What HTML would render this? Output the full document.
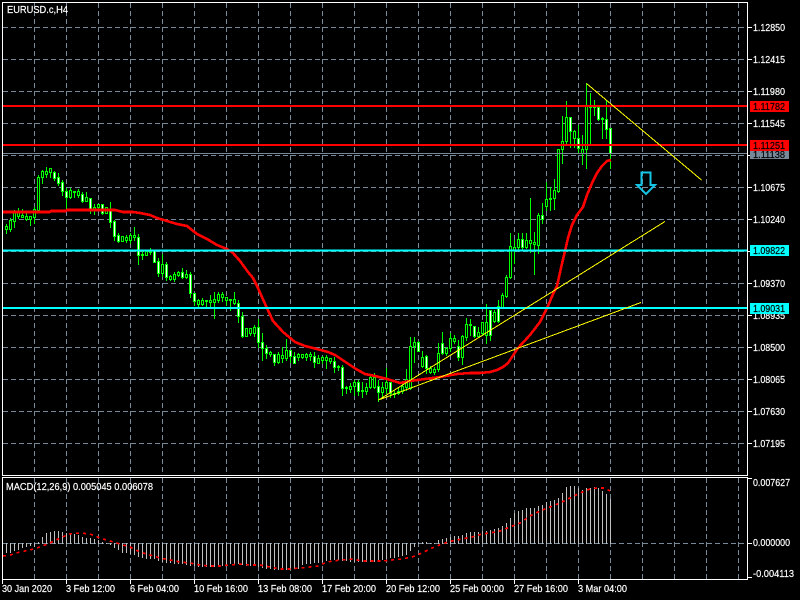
<!DOCTYPE html>
<html><head><meta charset="utf-8"><title>EURUSD.c,H4</title>
<style>
html,body{margin:0;padding:0;background:#000;width:800px;height:600px;overflow:hidden}
svg{display:block;position:absolute;left:0;top:0}
text{font-family:"Liberation Sans",sans-serif;font-size:10.5px;fill:#fff;stroke:#fff;stroke-width:.2px}
.k{fill:#000;stroke:#000}
</style></head><body>
<svg id="c" width="800" height="600" viewBox="0 0 800 600" xmlns="http://www.w3.org/2000/svg">
<g id="grid" stroke="#778899" stroke-width="1" stroke-dasharray="5 3" shape-rendering="crispEdges"></g>
<g id="hist" stroke="#c0c0c0" stroke-width="1" shape-rendering="crispEdges"></g>
<polyline fill="none" stroke="#ff0000" stroke-width="1.6" stroke-dasharray="3 4" shape-rendering="crispEdges" points="3,556 10,555 20,552 30,550 40,547 50,543 60,538 70,534 80,533 90,534 100,538 110,541 120,544 130,547 140,552 150,555 160,558 170,560 180,562 190,563 200,565 210,566 220,566 230,565 240,564 250,565 260,565 270,567 280,569 290,569 300,568 310,567 318,566 322,564 332,561 342,560 352,559 362,561 372,561 382,561 392,560 402,559 412,557 422,553 432,548 442,544 452,541 462,539 472,537 482,534 490,533 500,531 510,527 520,523 530,516 540,511 550,507 560,503 570,498 580,493 590,489 597,488 605,488 610,491"/>
<g id="cand" shape-rendering="crispEdges"></g>
<polyline fill="none" stroke="#ff0000" stroke-width="2.6" shape-rendering="crispEdges" stroke-linejoin="round" points="3,212 50,212 51,211 66,211 67,210 115,210 123,212 133,212 140,213 150,215 157,218 167,221 177,224 187,226 192,230 197,234 207,239 217,245 227,249 233,253 240,261 248,272 253,278 258,288 262,297 266,306 273,321 283,332 295,342 305,346 317,349 328,352 335,355 347,363 356,369 365,374 375,376 387,379 400,383 410,381 425,379 440,377 457,374 470,373 480,373 490,372 497,370 503,367 508,363 518,348 530,335 540,322 548,306 553,294 557,286 561,268 565,251 568,238 572,225 577,215 583,207 587,195 592,183 597,173 602,166 607,161 611,160"/>
<g shape-rendering="crispEdges">
<rect x="3" y="153" width="744" height="1" fill="#778899"/>
<rect x="3" y="105" width="744" height="2" fill="#ff0000"/>
<rect x="3" y="144" width="744" height="2" fill="#ff0000"/>
<rect x="3" y="249.5" width="744" height="2" fill="#00ffff"/>
<rect x="3" y="307" width="744" height="2" fill="#00ffff"/>
</g>
<g stroke="#ffff00" stroke-width="1" fill="none" shape-rendering="crispEdges">
<line x1="586.5" y1="83.5" x2="701.5" y2="180"/>
<line x1="378.5" y1="400" x2="665" y2="221.5"/>
<line x1="378.5" y1="400" x2="641" y2="302.5"/>
</g>
<path d="M641.5 172.5H650.5V185H655L646 194L637 185H641.5Z" fill="none" stroke="#14c4e4" stroke-width="2"/>

<g fill="#fff" shape-rendering="crispEdges">
<rect x="2" y="2" width="746" height="1"/>
<rect x="2" y="2" width="1" height="474"/>
<rect x="747" y="2" width="1" height="474"/>
<rect x="2" y="475" width="746" height="1"/>
<rect x="2" y="477" width="746" height="1"/>
<rect x="2" y="477" width="1" height="103"/>
<rect x="747" y="477" width="1" height="103"/>
<rect x="2" y="579" width="746" height="1"/>
</g>
<g id="ticks" fill="#fff" shape-rendering="crispEdges"></g>

<g>
<text x="7" y="13" textLength="61" lengthAdjust="spacingAndGlyphs">EURUSD.c,H4</text>
<text x="6" y="490" textLength="147" lengthAdjust="spacingAndGlyphs">MACD(12,26,9) 0.005045 0.006078</text>
<text x="753" y="31" textLength="32" lengthAdjust="spacingAndGlyphs">1.12850</text>
<text x="753" y="63" textLength="32" lengthAdjust="spacingAndGlyphs">1.12415</text>
<text x="753" y="95" textLength="32" lengthAdjust="spacingAndGlyphs">1.11980</text>
<text x="753" y="127" textLength="32" lengthAdjust="spacingAndGlyphs">1.11545</text>
<text x="753" y="191" textLength="32" lengthAdjust="spacingAndGlyphs">1.10675</text>
<text x="753" y="223" textLength="32" lengthAdjust="spacingAndGlyphs">1.10240</text>
<text x="753" y="287" textLength="32" lengthAdjust="spacingAndGlyphs">1.09370</text>
<text x="753" y="319" textLength="32" lengthAdjust="spacingAndGlyphs">1.08935</text>
<text x="753" y="351" textLength="32" lengthAdjust="spacingAndGlyphs">1.08500</text>
<text x="753" y="383" textLength="32" lengthAdjust="spacingAndGlyphs">1.08065</text>
<text x="753" y="415" textLength="32" lengthAdjust="spacingAndGlyphs">1.07630</text>
<text x="753" y="447" textLength="32" lengthAdjust="spacingAndGlyphs">1.07195</text>
<text x="753" y="486" textLength="37" lengthAdjust="spacingAndGlyphs">0.007627</text>
<text x="753" y="546" textLength="37" lengthAdjust="spacingAndGlyphs">0.000000</text>
<text x="753" y="577" textLength="41" lengthAdjust="spacingAndGlyphs">-0.004113</text>

<text x="2" y="592" textLength="50" lengthAdjust="spacingAndGlyphs">30 Jan 2020</text>
<text x="66" y="592" textLength="49" lengthAdjust="spacingAndGlyphs">3 Feb 12:00</text>
<text x="130" y="592" textLength="49" lengthAdjust="spacingAndGlyphs">6 Feb 04:00</text>
<text x="194" y="592" textLength="54" lengthAdjust="spacingAndGlyphs">10 Feb 16:00</text>
<text x="258" y="592" textLength="54" lengthAdjust="spacingAndGlyphs">13 Feb 08:00</text>
<text x="322" y="592" textLength="54" lengthAdjust="spacingAndGlyphs">17 Feb 20:00</text>
<text x="386" y="592" textLength="54" lengthAdjust="spacingAndGlyphs">20 Feb 12:00</text>
<text x="450" y="592" textLength="54" lengthAdjust="spacingAndGlyphs">25 Feb 00:00</text>
<text x="514" y="592" textLength="54" lengthAdjust="spacingAndGlyphs">27 Feb 16:00</text>
<text x="578" y="592" textLength="49" lengthAdjust="spacingAndGlyphs">3 Mar 04:00</text>
</g>

<g shape-rendering="crispEdges">
<rect x="750" y="148" width="39" height="11" fill="#778899"/>
<rect x="750" y="101" width="39" height="11" fill="#ff0000"/>
<rect x="750" y="140" width="39" height="11" fill="#ff0000"/>
<rect x="750" y="245" width="39" height="11" fill="#00ffff"/>
<rect x="750" y="303" width="39" height="11" fill="#00ffff"/>
</g>
<text class="k" x="753" y="158" textLength="32" lengthAdjust="spacingAndGlyphs">1.11138</text>
<rect x="750" y="140" width="39" height="11" fill="#ff0000" shape-rendering="crispEdges"/>
<text class="k" x="753" y="110" textLength="32" lengthAdjust="spacingAndGlyphs">1.11782</text>
<text class="k" x="753" y="149" textLength="32" lengthAdjust="spacingAndGlyphs">1.11251</text>
<text class="k" x="753" y="254" textLength="32" lengthAdjust="spacingAndGlyphs">1.09822</text>
<text class="k" x="753" y="312" textLength="32" lengthAdjust="spacingAndGlyphs">1.09031</text>
</svg>
<script>
(function(){
var NS="http://www.w3.org/2000/svg";
function el(p,n,a){var e=document.createElementNS(NS,n);for(var k in a)e.setAttribute(k,a[k]);document.getElementById(p).appendChild(e);return e;}
var x,y,i;
for(x=34;x<747;x+=32){
 el("grid","line",{x1:x+.5,y1:3,x2:x+.5,y2:475});
 el("grid","line",{x1:x+.5,y1:478,x2:x+.5,y2:579});
}
for(y=27;y<470;y+=32) el("grid","line",{x1:3,y1:y+.5,x2:747,y2:y+.5});
el("grid","line",{x1:3,y1:543.5,x2:747,y2:543.5});
for(y=27;y<470;y+=32) el("ticks","rect",{x:748,y:y,width:4,height:1});
[478,543,577].forEach(function(v){el("ticks","rect",{x:748,y:v,width:4,height:1});});
for(x=2;x<600;x+=64) el("ticks","rect",{x:x,y:580,width:1,height:4});

var A=[250,248,242,240,235,232,228,230,215,200,190,185,183,183,185,190,190,193,195,202,203,205,208,210,215,220,225,235,240,248,250,252,255,262,265,268,268,268,272,275,278,280,282,282,283,285,287,288,290,291,292,290,290,288,287,285,283,282,283,285,287,288,289,291,294,296,298,300,301,301,300,300,298,297];
var B=[165,162,162,160,158,156,154,150,150,150,152,153,155,157,157,155,155,155,155,153,150,148,145,143,140,138,135,122,110,103,97,96,100,100,90,86,84,80,78,78,75,70,67,67,67,62,62,60,58,55];
var C=[168,158,143,130,123,120,115,113,113,108,106,95,93,90,83,68,52,48,48,55,60,55,53,52,55,62,72,88];
var h=[];
A.forEach(function(v){h.push(470+v/3);});
B.forEach(function(v){h.push(510+v/3);});
C.forEach(function(v){h.push(470+v/3);});
h.forEach(function(v,i){
 var X=6+4*i+.5,t=Math.round(v);
 el("hist","line",{x1:X,x2:X,y1:Math.min(t,543),y2:Math.max(t,544)});
});

var d=[
[226,229,224,233,0],[220,229,218,231,0],[212,221,210,227,0],[212,216,208,218,0],[215,217,209,217,0],[216,219,212,220,0],[216,219,216,225,0],[209,217,207,223,0],
[177,210,175,212,0],[171,177,170,183,0],[171,174,167,177,0],[168,172,168,177,0],[172,178,171,180,1],[177,183,173,185,1],[182,191,180,195,1],[191,197,188,210,1],
[190,197,188,198,0],[191,192,191,197,0],[191,195,189,197,0],[194,201,192,202,1],[197,201,192,201,0],[198,209,198,213,1],[207,210,204,214,0],[204,207,204,210,0],
[204,213,204,214,1],[207,213,207,213,0],[210,222,202,227,1],[221,236,220,240,1],[235,241,233,242,1],[236,241,236,241,0],[237,240,235,242,0],[235,240,233,243,0],
[235,237,227,240,0],[237,255,234,264,1],[254,255,251,259,0],[251,255,251,255,0],[251,252,248,254,0],[250,262,250,262,1],[261,273,258,276,1],[264,273,254,276,0],
[264,277,262,280,1],[276,279,275,280,0],[274,279,272,281,0],[272,275,271,276,0],[272,277,268,278,1],[274,277,270,278,0],[274,293,272,297,1],[293,301,293,305,1],
[300,304,299,306,0],[300,304,298,305,0],[300,301,300,307,0],[300,302,295,307,0],[299,302,292,318,0],[294,300,292,302,0],[294,297,292,301,0],[297,300,297,305,0],
[299,300,299,310,0],[299,303,292,304,0],[303,316,300,322,1],[316,336,312,337,1],[328,336,328,336,0],[328,333,328,335,0],[327,333,325,336,0],[327,342,319,347,1],
[342,348,333,360,1],[348,353,345,358,1],[352,354,351,356,0],[354,362,354,365,1],[354,362,352,363,0],[355,358,347,362,0],[350,358,339,360,0],[350,356,350,362,1],
[356,363,352,363,1],[354,357,353,360,0],[354,357,354,358,0],[354,357,353,360,0],[354,356,352,360,0],[356,362,352,367,1],[358,363,355,363,0],[357,360,356,363,0],
[357,360,355,368,0],[358,361,358,363,0],[361,367,357,372,1],[366,367,365,370,0],[367,388,365,395,1],[387,388,386,393,0],[386,389,383,392,0],[382,386,380,395,0],
[382,391,380,395,1],[390,391,382,397,0],[387,391,383,394,0],[377,387,375,388,0],[377,387,373,388,0],[386,392,380,401,1],[387,392,382,396,0],[382,388,368,393,0],
[382,393,382,397,1],[393,394,391,397,0],[391,393,388,394,0],[386,391,383,393,0],[379,387,369,390,0],[346,388,337,389,0],[342,346,337,362,0],[342,351,341,351,1],
[357,366,351,367,0],[356,368,355,373,1],[368,372,366,373,0],[369,372,367,374,0],[353,369,343,371,0],[343,353,332,354,1],[348,353,347,355,0],[338,348,333,351,0],
[338,341,335,343,0],[346,357,340,360,1],[336,357,335,364,0],[324,337,318,340,0],[324,325,319,335,0],[326,336,326,337,1],[332,336,327,337,0],[322,333,322,335,0],
[322,335,304,343,0],[310,335,310,340,1],[312,321,310,322,0],[306,321,300,322,1],[295,307,293,308,0],[277,296,275,297,0],[246,277,233,278,0],[247,250,240,263,0],
[239,247,233,249,0],[239,247,233,249,1],[240,247,233,248,0],[240,243,198,252,0],[242,244,232,274,0],[215,245,213,253,0],[215,219,203,223,1],[199,206,182,210,0],
[198,199,187,210,0],[190,198,179,209,0],[149,191,149,192,0],[141,149,116,163,0],[117,141,101,143,0],[117,131,117,147,1],[131,138,130,147,0],[138,148,125,153,1],
[149,153,135,164,0],[105,149,83,168,0],[105,107,93,145,0],[105,107,100,115,0],[107,119,107,120,1],[118,119,117,138,0],[119,129,100,138,1],[128,153,128,168,1]
];
d.forEach(function(c,i){
 var X=6+4*i;
 el("cand","line",{x1:X+.5,x2:X+.5,y1:c[2],y2:c[3]+1,stroke:"#00ff00","stroke-width":1});
 el("cand","rect",{x:X-.5,y:c[0]+.5,width:2,height:Math.max(c[1]-c[0],1),fill:c[4]?"#ffffff":"#000000",stroke:"#00ff00","stroke-width":1});
});
})();
</script>
</body></html>
